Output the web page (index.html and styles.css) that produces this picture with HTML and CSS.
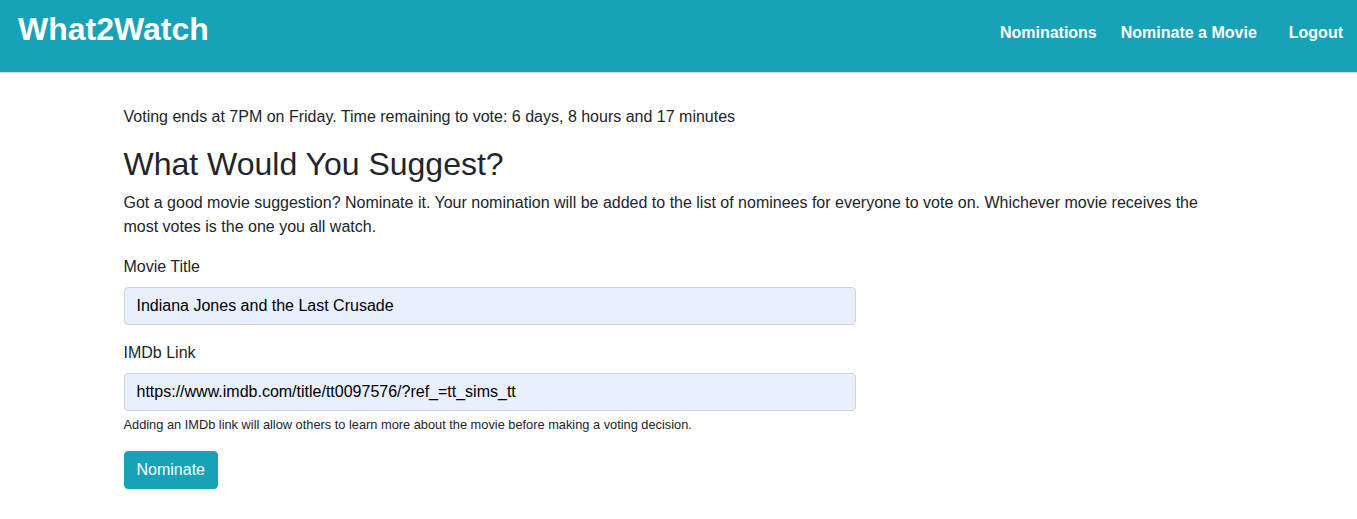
FILE: index.html
```html
<!DOCTYPE html>
<html lang="en">
<head>
<meta charset="utf-8">
<title>What2Watch</title>
<link rel="stylesheet" href="styles.css">
</head>
<body>
<header class="navbar">
  <a class="brand" href="#">What2Watch</a>
  <nav class="nav">
    <a class="nav-link" href="#">Nominations</a>
    <a class="nav-link nav-link-mid" href="#">Nominate a Movie</a>
    <a class="nav-link nav-link-last" href="#">Logout</a>
  </nav>
</header>
<main class="container">
  <p class="lead-note">Voting ends at 7PM on Friday. Time remaining to vote: 6 days, 8 hours and 17 minutes</p>
  <h2 class="title">What Would You Suggest?</h2>
  <p class="intro">Got a good movie suggestion? Nominate it. Your nomination will be added to the list of nominees for everyone to vote on. Whichever movie receives the most votes is the one you all watch.</p>
  <form class="form">
    <div class="form-group">
      <label class="label" for="title">Movie Title</label>
      <input class="input" id="title" type="text" value="Indiana Jones and the Last Crusade">
    </div>
    <div class="form-group">
      <label class="label" for="link">IMDb Link</label>
      <input class="input" id="link" type="text" value="https://www.imdb.com/title/tt0097576/?ref_=tt_sims_tt">
      <small class="help">Adding an IMDb link will allow others to learn more about the movie before making a voting decision.</small>
    </div>
    <button class="btn" type="button">Nominate</button>
  </form>
</main>
</body>
</html>
```
FILE: styles.css
```css
* { box-sizing: border-box; }
html, body { margin: 0; padding: 0; }
body {
  font-family: "Liberation Sans", Arial, sans-serif;
  font-size: 16px;
  line-height: 1.5;
  color: #212529;
  background: #fff;
}
.navbar {
  display: flex;
  justify-content: space-between;
  align-items: flex-start;
  height: 73px;
  background: #17a2b8;
  border-bottom: 1px solid #d6d8da;
  padding: 10px 14px 0 18px;
}
.brand {
  color: #fff;
  font-weight: bold;
  font-size: 32px;
  line-height: 1.2;
  text-decoration: none;
}
.nav {
  display: flex;
  margin-top: 11px;
}
.nav-link {
  color: #fff;
  font-weight: bold;
  font-size: 16px;
  line-height: 24px;
  text-decoration: none;
}
.nav-link-mid { margin-left: 24px; }
.nav-link-last { margin-left: 32px; }
.container {
  max-width: 1140px;
  margin: 0 auto;
  padding: 32px 15px 0;
}
.lead-note { margin: 0 0 16px; }
.title {
  font-size: 32px;
  font-weight: 500;
  line-height: 1.2;
  margin: 0 0 8px;
}
.intro { margin: 0 0 16px; }
.form-group { margin-bottom: 16px; }
.label {
  display: inline-block;
  margin-bottom: 8px;
}
.input {
  display: block;
  width: 732px;
  height: 38px;
  padding: 6px 12px;
  font-family: inherit;
  font-size: 16px;
  line-height: 1.5;
  color: #000;
  background: #e8f0fe;
  border: 1px solid #ced4da;
  border-radius: 4px;
}
.help {
  display: block;
  margin-top: 4px;
  font-size: 12.8px;
}
.btn {
  display: inline-block;
  height: 38px;
  padding: 6px 12px;
  font-family: inherit;
  font-size: 16px;
  line-height: 1.5;
  color: #fff;
  background: #17a2b8;
  border: 1px solid #17a2b8;
  border-radius: 4px;
}
```
